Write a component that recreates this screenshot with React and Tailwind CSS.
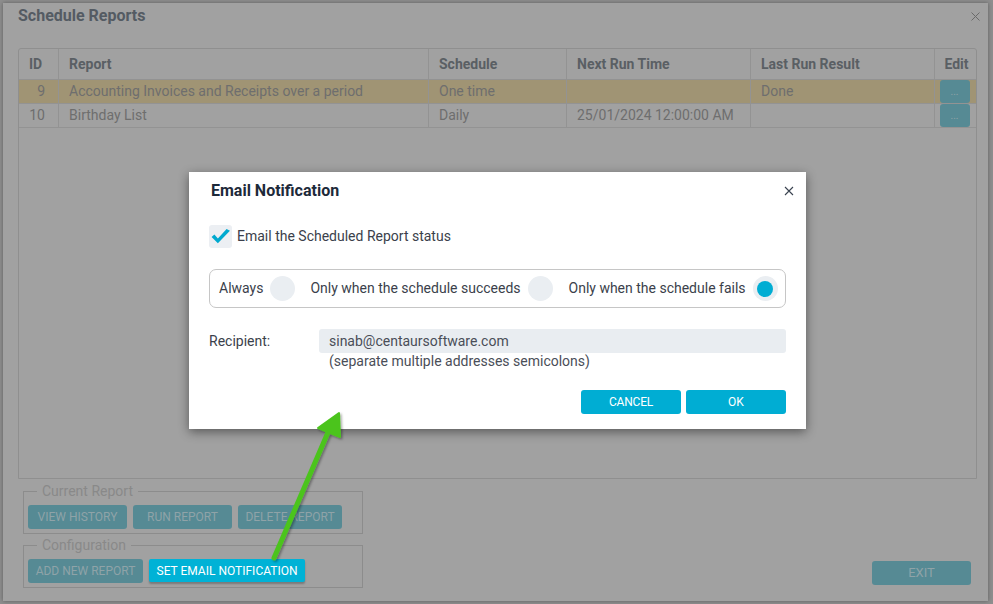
import { useState } from "react";

const COLS = [
  { key: "id", label: "ID", w: "w-[40px]", align: "text-right pr-[13px] pl-[10px]" },
  { key: "report", label: "Report", w: "w-[370px]", align: "pl-[10px]" },
  { key: "schedule", label: "Schedule", w: "w-[138px]", align: "pl-[10px]" },
  { key: "next", label: "Next Run Time", w: "w-[184px]", align: "pl-[10px]" },
  { key: "last", label: "Last Run Result", w: "w-[184px]", align: "pl-[10px]" },
];

const ROWS = [
  { id: "9", report: "Accounting Invoices and Receipts over a period", schedule: "One time", next: "", last: "Done", selected: true },
  { id: "10", report: "Birthday List", schedule: "Daily", next: "25/01/2024 12:00:00 AM", last: "" },
];

const OPTIONS = [
  { key: "always", label: "Always" },
  { key: "success", label: "Only when the schedule succeeds" },
  { key: "fail", label: "Only when the schedule fails" },
];

function DimButton({ children, className = "" }) {
  return (
    <button className={`h-[24px] rounded-[3px] bg-[#568a94] text-[12px] text-[#8fa3a8] uppercase ${className}`}>
      {children}
    </button>
  );
}

function Radio({ checked, onClick }) {
  return (
    <span onClick={onClick}
      className="shrink-0 w-[25px] h-[25px] rounded-full bg-[#eaeef2] flex items-center justify-center cursor-pointer">
      {checked && <span className="w-[16px] h-[16px] rounded-full bg-[#00add3]" />}
    </span>
  );
}

export default function App() {
  const [option, setOption] = useState("fail");
  const [emailOn, setEmailOn] = useState(true);

  return (
    <div className="relative w-[993px] h-[604px] overflow-hidden bg-[#8e8e8e] p-[3px] pr-[5px]" style={{ fontFamily: "Roboto, 'Liberation Sans', sans-serif" }}>
      {/* dimmed schedule reports window */}
      <div className="w-full h-full bg-[#a1a1a1] shadow-[0_0_4px_rgba(0,0,0,0.35)] flex flex-col pl-[15px] pr-[11px]">
        <div className="flex items-center justify-between h-[26px]">
          <h1 className="text-[16px] font-bold text-[#545b63]">Schedule Reports</h1>
          <svg width="9" height="9" viewBox="0 0 9 9" className="mr-[-3px] mt-[1px]">
            <path d="M0.5 0.5 L8.5 8.5 M8.5 0.5 L0.5 8.5" stroke="#6a6a6a" strokeWidth="1" />
          </svg>
        </div>

        {/* table */}
        <div className="mt-[19px] h-[431px] border border-[#8f8f8f] rounded-t-[3px] flex flex-col">
          <div className="flex h-[31px] border-b border-[#929292] text-[14px] font-bold text-[#5a5f64]">
            {COLS.map(c => (
              <div key={c.key} className={`${c.w} pl-[10px] flex items-center border-r border-[#939393]`}>
                {c.label}
              </div>
            ))}
            <div className="flex-1 flex items-center justify-center pl-[2px]">Edit</div>
          </div>
          {ROWS.map(r => (
            <div key={r.id} className={`flex h-[24px] border-b border-[#939393] text-[14px] text-[#6e6e6e] ${r.selected ? "bg-[#a09474]" : ""}`}>
              {COLS.map(c => (
                <div key={c.key} className={`${c.w} ${c.align} flex items-center ${c.key === "id" ? "justify-end" : ""} border-r border-[#939393]`}>
                  {r[c.key]}
                </div>
              ))}
              <div className="flex-1 flex items-center justify-center pr-[2px]">
                <span className="w-[30px] h-[23px] rounded-[3px] bg-[#568a94] text-[#8fa3a8] text-[10px] flex items-center justify-center leading-none">...</span>
              </div>
            </div>
          ))}
        </div>

        {/* bottom area */}
        <div className="flex items-end justify-between mt-[3px] pl-[5px]">
          <div className="flex flex-col">
            <fieldset className="w-[340px] border border-[#8c8c8c] px-[4px] pb-[4px]">
              <legend className="ml-[9px] px-[5px] text-[14px] text-[#898989] leading-[18px]">Current Report</legend>
              <div className="flex gap-[6px] mt-[5px]">
                <DimButton className="w-[99px]">View History</DimButton>
                <DimButton className="w-[99px]">Run Report</DimButton>
                <DimButton className="w-[104px]">Delete Report</DimButton>
              </div>
            </fieldset>
            <fieldset className="w-[340px] border border-[#8c8c8c] px-[4px] pb-[4px] mt-[2px]">
              <legend className="ml-[9px] px-[5px] text-[14px] text-[#898989] leading-[18px]">Configuration</legend>
              <div className="flex gap-[6px] mt-[5px]">
                <DimButton className="w-[115px]">Add New Report</DimButton>
                <button className="w-[156px] h-[23px] rounded-[2px] bg-[#00b2d6] text-white text-[12px] uppercase shadow-[0_2px_2px_rgba(0,0,0,0.25)]">
                  Set Email Notification
                </button>
              </div>
            </fieldset>
          </div>
          <DimButton className="w-[99px] mb-[3px] mr-[6px] text-[13px]">Exit</DimButton>
        </div>
      </div>

      {/* Email Notification modal */}
      <div className="absolute left-[189px] top-[172px] w-[617px] h-[257px] bg-white shadow-[0_3px_10px_rgba(0,0,0,0.45)] px-[20px]">
        <div className="flex items-center justify-between h-[36px] pt-[2px] pl-[2px]">
          <h2 className="text-[16px] font-bold text-[#1d2a3a]">Email Notification</h2>
          <svg width="10" height="10" viewBox="0 0 10 10" className="mr-[-8px]">
            <path d="M1 1 L9 9 M9 1 L1 9" stroke="#3a4350" strokeWidth="1.1" />
          </svg>
        </div>

        <label className="flex items-center gap-[5px] mt-[17px] cursor-pointer" onClick={() => setEmailOn(v => !v)}>
          <span className="w-[23px] h-[23px] rounded-[3px] bg-[#eceff3] flex items-center justify-center">
            {emailOn && (
              <svg width="21" height="17" viewBox="0 0 20 16">
                <path d="M1.5 8.5 L7.5 14.5 L19 2.5 L15.8 0.8 L7.5 9.8 L4.2 6 Z" fill="#00a9cf" />
              </svg>
            )}
          </span>
          <span className="text-[14px] text-[#3b3f4b]">Email the Scheduled Report status</span>
        </label>

        <div className="mt-[21px] h-[39px] border border-[#c6c6c6] rounded-[7px] flex items-center pl-[9px] pr-[7px] text-[14px] text-[#3b3f4b] whitespace-nowrap">
          {OPTIONS.map((o, i) => (
            <div key={o.key} className={`flex items-center gap-[7px] shrink-0 ${i === 0 ? "mr-[15px]" : i === 1 ? "mr-[16px]" : ""}`}>
              <span>{o.label}</span>
              <Radio checked={option === o.key} onClick={() => setOption(o.key)} />
            </div>
          ))}
        </div>

        <div className="flex mt-[21px]">
          <span className="w-[110px] text-[14px] text-[#3b3f4b] leading-[24px]">Recipient:</span>
          <div className="flex-1">
            <div className="h-[24px] rounded-[3px] bg-[#e9edf1] px-[10px] flex items-center text-[14px] text-[#4a4e58]">
              sinab@centaursoftware.com
            </div>
            <p className="pl-[10px] text-[14px] text-[#4a4e58] leading-[18px] mt-[-1px]">(separate multiple addresses semicolons)</p>
          </div>
        </div>

        <div className="flex justify-end gap-[5px] mt-[20px]">
          <button className="w-[100px] h-[24px] rounded-[3px] bg-[#00add3] text-white text-[12px] tracking-[-0.2px]">CANCEL</button>
          <button className="w-[100px] h-[24px] rounded-[3px] bg-[#00add3] text-white text-[12px]">OK</button>
        </div>
      </div>

      {/* green arrow */}
      <svg className="absolute left-0 top-0 pointer-events-none" width="993" height="604">
        <defs>
          <filter id="sh" x="-50%" y="-50%" width="200%" height="200%">
            <feDropShadow dx="1.5" dy="1.5" stdDeviation="1.2" floodColor="#000" floodOpacity="0.35" />
          </filter>
        </defs>
        <g filter="url(#sh)">
          <line x1="274" y1="558" x2="329" y2="430" stroke="#4cc41f" strokeWidth="5" strokeLinecap="round" />
          <path d="M339 413 L340 437 L318 428 Z" fill="#4cc41f" stroke="#4cc41f" strokeWidth="2" strokeLinejoin="round" />
        </g>
      </svg>
    </div>
  );
}
